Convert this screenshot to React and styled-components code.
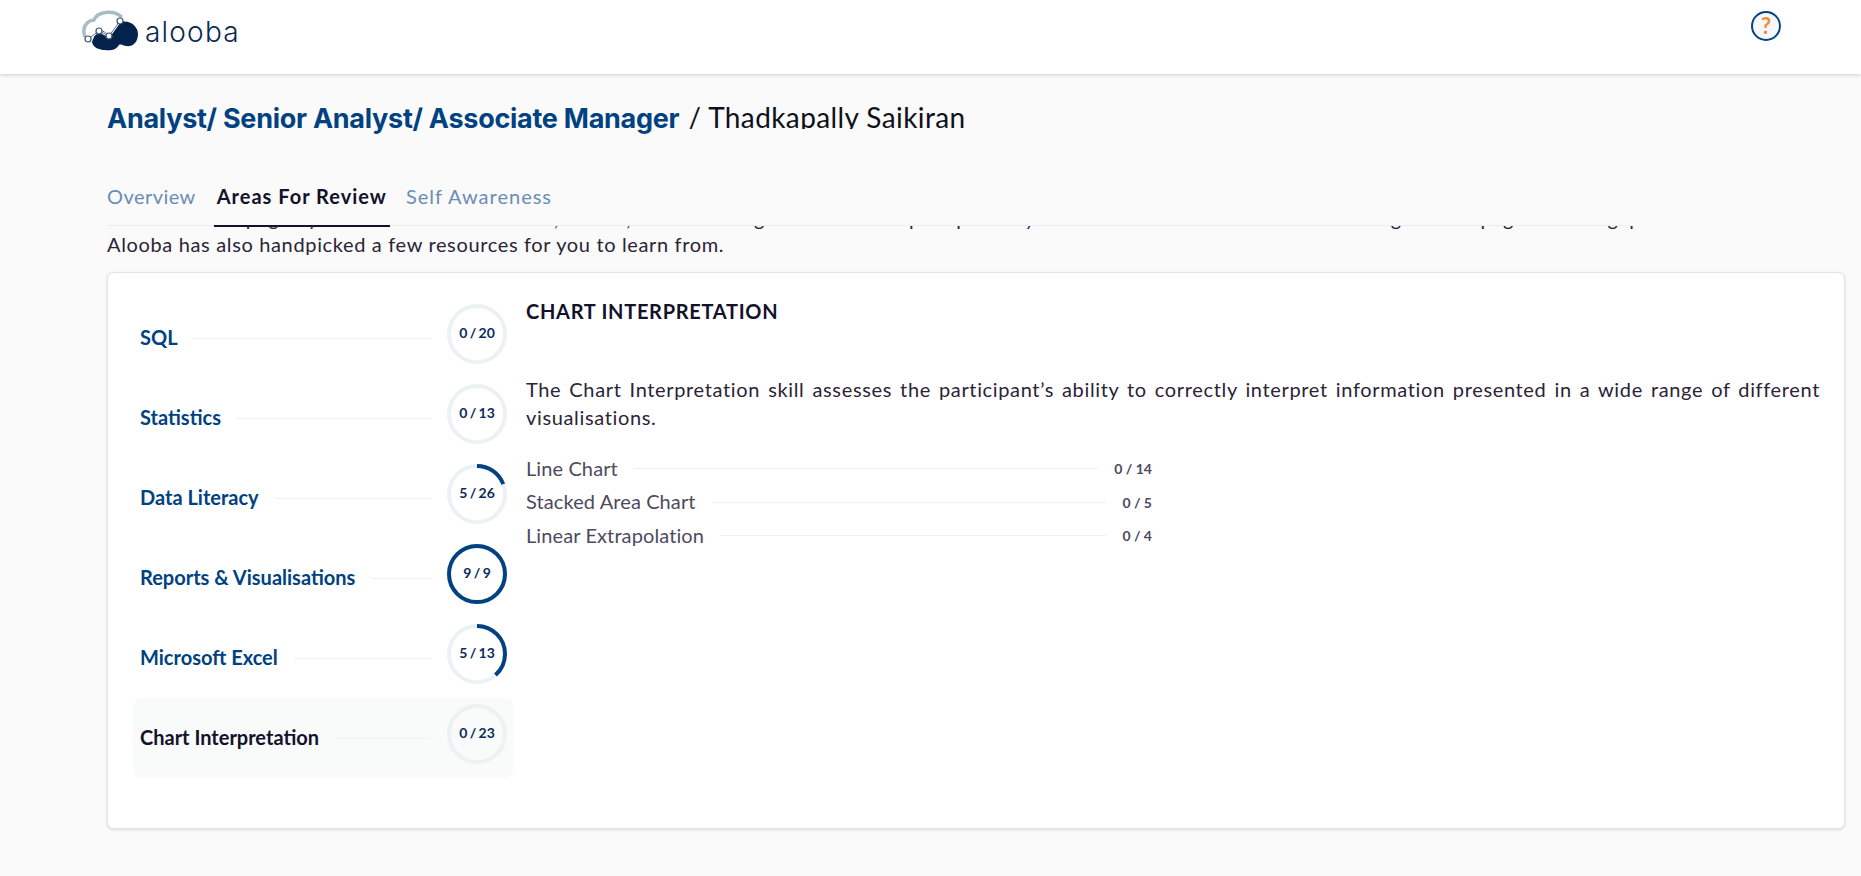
import React from 'react'
import styled, { createGlobalStyle } from 'styled-components'

const GlobalStyle = createGlobalStyle`
  html, body {
    margin: 0;
    padding: 0;
    background: #fafafa;
    font-family: 'Lato', 'Noto Sans', sans-serif;
  }
  * { box-sizing: border-box; }
`

const Page = styled.div`
  width: 1861px;
  height: 876px;
  overflow: hidden;
  background: #fafafa;
`

const Header = styled.header`
  height: 74px;
  background: #fff;
  box-shadow: 0 1px 4px rgba(0, 0, 0, 0.18);
  display: flex;
  justify-content: space-between;
  padding: 9px 80px 0 82px;
`

const Logo = styled.div`
  display: flex;
  align-items: flex-start;
  gap: 7px;
`

const LogoWord = styled.span`
  font-family: 'Inter', sans-serif;
  font-weight: 300;
  font-size: 28px;
  letter-spacing: 1.2px;
  line-height: 46px;
  color: #0b2a52;
`

const Help = styled.div`
  width: 30px;
  height: 30px;
  margin-top: 2px;
  border: 2px solid #004281;
  border-radius: 50%;
  background: #f5f7f9;
  color: #f58a33;
  font-size: 22px;
  font-weight: 700;
  line-height: 26px;
  text-align: center;
`

const Main = styled.main`
  padding: 0 16px 0 107px;
`

const TitleRow = styled.div`
  display: flex;
  align-items: baseline;
  gap: 9px;
  padding-top: 26px;
  height: 97px;
  line-height: 34px;
`

const JobTitle = styled.h1`
  margin: 0;
  font-family: 'Inter', sans-serif;
  font-size: 27px;
  font-weight: 700;
  letter-spacing: -0.27px;
  color: #004281;
`

const Candidate = styled.span`
  font-size: 28px;
  letter-spacing: 0.4px;
  color: #10101a;
  clip-path: inset(0 0 5px 0);
`

const Tabs = styled.nav`
  display: flex;
  align-items: flex-start;
  width: 1524px;
  height: 55px;
  border-bottom: 1px solid #ececec;
`

const Tab = styled.a`
  height: 56px;
  padding: 12px 3px 0;
  margin-right: 13px;
  font-size: 20px;
  line-height: 27px;
  letter-spacing: 1px;
  font-weight: ${p => (p.$active ? 700 : 400)};
  color: ${p => (p.$active ? '#12122a' : '#6a8db5')};
  border-bottom: ${p => (p.$active ? '2px solid #12122a' : 'none')};
`

const FirstTab = styled(Tab)`
  padding-left: 0;
  margin-right: 15px;
  letter-spacing: 0.45px;
`

const Intro = styled.div`
  height: 46px;
  overflow: hidden;
  font-size: 20px;
  line-height: 30px;
  color: #2b2436;
`

const ClippedLine = styled.p`
  margin: -23px 0 0;
  height: 26px;
  white-space: nowrap;
  letter-spacing: 0.65px;
`

const ClippedLink = styled.span`
  color: #004281;
`

const IntroLine = styled.p`
  margin: 0;
  letter-spacing: 0.65px;
`

const Card = styled.section`
  height: 557px;
  background: #fff;
  border-radius: 6px;
  border: 1px solid #e2e2e2;
  box-shadow: 0 1px 3px rgba(0, 0, 0, 0.12);
  display: flex;
  padding: 25px 24px 0 25px;
`

const SkillList = styled.div`
  width: 380px;
  flex: none;
`

const SkillRow = styled.div`
  height: 80px;
  display: flex;
  padding: 6px 6px 0 7px;
  border-radius: 8px;
  background: ${p => (p.$selected ? '#f9fafa' : 'transparent')};
`

const SkillName = styled.span`
  margin-top: 20px;
  font-size: 20px;
  line-height: 26px;
  font-weight: 700;
  color: ${p => (p.$selected ? '#12122a' : '#004281')};
  white-space: nowrap;
`

const Leader = styled.span`
  flex: 1;
  height: 1px;
  margin: 34px 16px 0;
  background: #edf2f6;
`

const Ring = styled.div`
  position: relative;
  width: 60px;
  height: 60px;
  flex: none;
`

const RingLabel = styled.span`
  position: absolute;
  inset: 0;
  display: flex;
  align-items: center;
  justify-content: center;
  padding-bottom: 4px;
  font-size: 14px;
  font-weight: 700;
  word-spacing: -1px;
  color: #0a2d5c;
`

const Detail = styled.div`
  flex: 1;
  padding-left: 13px;
`

const DetailTitle = styled.h2`
  margin: 0;
  font-size: 20px;
  line-height: 26px;
  font-weight: 700;
  letter-spacing: 0.7px;
  color: #12122a;
`

const Description = styled.p`
  margin: 51px 0 0;
  font-size: 20px;
  line-height: 28px;
  letter-spacing: 0.65px;
  text-align: justify;
  color: #2b2436;
`

const SubSkills = styled.div`
  width: 626px;
  margin-top: 20px;
`

const SubRow = styled.div`
  height: 33.5px;
  display: flex;
  align-items: center;
`

const SubName = styled.span`
  font-size: 20px;
  letter-spacing: 0.1px;
  color: #4e4a60;
  white-space: nowrap;
`

const SubLeader = styled.span`
  flex: 1;
  height: 1px;
  margin: 2px 16px 0;
  background: #eef1f3;
`

const SubScore = styled.span`
  margin-top: 2px;
  font-size: 14px;
  font-weight: 700;
  color: #4e4a60;
`

const skills = [
  { name: 'SQL', score: 0, total: 20 },
  { name: 'Statistics', score: 0, total: 13 },
  { name: 'Data Literacy', score: 5, total: 26 },
  { name: 'Reports & Visualisations', score: 9, total: 9 },
  { name: 'Microsoft Excel', score: 5, total: 13 },
  { name: 'Chart Interpretation', score: 0, total: 23, selected: true },
]

const subSkills = [
  { name: 'Line Chart', score: '0 / 14' },
  { name: 'Stacked Area Chart', score: '0 / 5' },
  { name: 'Linear Extrapolation', score: '0 / 4' },
]

const ScoreRing = ({ score, total }) => {
  const r = 28
  const len = 2 * Math.PI * r
  return (
    <Ring>
      <svg width="60" height="60" viewBox="0 0 60 60">
        <circle cx="30" cy="30" r={r} fill="none" stroke="#ecf1f4" strokeWidth="4" />
        {score > 0 && (
          <circle
            cx="30"
            cy="30"
            r={r}
            fill="none"
            stroke="#004281"
            strokeWidth="4"
            strokeDasharray={`${(score / total) * len} ${len}`}
            transform="rotate(-90 30 30)"
          />
        )}
      </svg>
      <RingLabel>
        {score} / {total}
      </RingLabel>
    </Ring>
  )
}

const nodes = [[6, 30], [17, 22], [27, 27], [38, 12]]

const LogoMark = () => (
  <svg width="56" height="42" viewBox="0 0 56 42">
    <path d="M3 28 C0 20 3 12 12 11 C15 3 30 0 40 8" fill="none" stroke="#a9bcc4" strokeWidth="3.5" />
    <path
      d="M10 33 C12 27 15 22 17 21 C22 21 25 25 28 26 C32 22 35 15 40 13 C47 11 56 17 56 25 C56 34 50 38 44 37 C40 36 38 35 37 36 C34 41 28 42 23 41 C18 41 11 39 10 33 Z"
      fill="#04234c"
    />
    <polyline points="6,30 17,22 27,27 38,12" fill="none" stroke="#fff" strokeWidth="2.6" />
    <polyline points="6,30 17,22 27,27 38,12" fill="none" stroke="#5f7688" strokeWidth="1" />
    {nodes.map(([x, y]) => (
      <circle key={x} cx={x} cy={y} r="3" fill="#fff" stroke="#3c506a" strokeWidth="1.2" />
    ))}
  </svg>
)

const App = () => (
  <Page>
    <GlobalStyle />
    <Header>
      <Logo>
        <LogoMark />
        <LogoWord>alooba</LogoWord>
      </Logo>
      <Help>?</Help>
    </Header>
    <Main>
      <TitleRow>
        <JobTitle>Analyst/ Senior Analyst/ Associate Manager</JobTitle>
        <Candidate>/ Thadkapally Saikiran</Candidate>
      </TitleRow>
      <Tabs>
        <FirstTab>Overview</FirstTab>
        <Tab $active>Areas For Review</Tab>
        <Tab>Self Awareness</Tab>
      </Tabs>
      <Intro>
        <ClippedLine>
          The results on page by the skills tested are here, and so, the areas to go over in the top on part of{' '}
          <ClippedLink>your results</ClippedLink> that are in the list below a guide for page and the gap in the
        </ClippedLine>
        <IntroLine>Alooba has also handpicked a few resources for you to learn from.</IntroLine>
      </Intro>
      <Card>
        <SkillList>
          {skills.map(s => (
            <SkillRow key={s.name} $selected={s.selected}>
              <SkillName $selected={s.selected}>{s.name}</SkillName>
              <Leader />
              <ScoreRing score={s.score} total={s.total} />
            </SkillRow>
          ))}
        </SkillList>
        <Detail>
          <DetailTitle>CHART INTERPRETATION</DetailTitle>
          <Description>
            The Chart Interpretation skill assesses the participant’s ability to correctly interpret information presented in a wide range of different visualisations.
          </Description>
          <SubSkills>
            {subSkills.map(s => (
              <SubRow key={s.name}>
                <SubName>{s.name}</SubName>
                <SubLeader />
                <SubScore>{s.score}</SubScore>
              </SubRow>
            ))}
          </SubSkills>
        </Detail>
      </Card>
    </Main>
  </Page>
)

export default App
